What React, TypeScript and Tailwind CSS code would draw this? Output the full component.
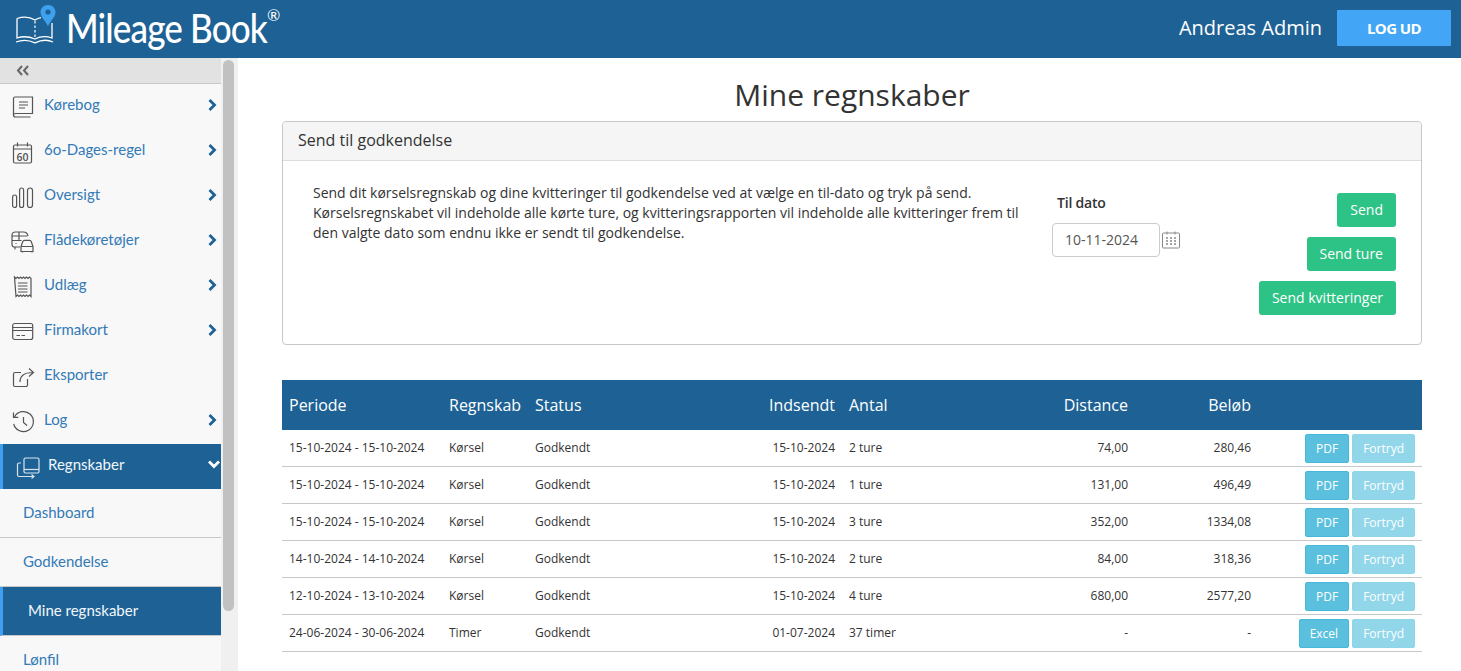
import React from "react";

function Logo() {
  return (
    <svg width="42" height="48" viewBox="0 0 42 48" fill="none" className="shrink-0">
      <path d="M2 13.500V33c6-2 12-1.500 18 1 5-2.500 11-3 17-1V18" stroke="#fff" strokeWidth="1.300" />
      <path d="M2 13.500c6-2 13-1.500 18 1.500 2-1.200 4-1.900 6-2.300" stroke="#fff" strokeWidth="1.300" />
      <path d="M20 16v17" stroke="#fff" strokeWidth="1.200" strokeDasharray="2.500 2" />
      <path d="M1 37c6-2.400 13-2 19 .8 6-2.800 13-3.200 18-.8" stroke="#fff" strokeWidth="1.300" />
      <path d="M33 0c-4.400 0-7.500 3.200-7.500 7.200 0 4.800 5.200 8.800 7.500 14 2.300-5.200 7.500-9.200 7.500-14C40.500 3.200 37.400 0 33 0z" fill="#3fa0ef" />
      <circle cx="33" cy="7" r="2.600" fill="#1e6295" />
    </svg>
  );
}

const iconProps = {
  width: 24,
  height: 24,
  viewBox: "0 0 24 24",
  fill: "none",
  stroke: "#555",
  strokeWidth: 1.2,
  className: "shrink-0",
};

function BookIcon() {
  return (
    <svg {...iconProps}>
      <path d="M1.500 20V3.500C1.500 2.500 2.300 2 3 2H20.500V18.500H3.500C2.300 18.500 1.500 19 1.500 20s.8 2 2 2h15" />
      <path d="M7 7h9M7 10h9M7 13h6" />
    </svg>
  );
}

function CalendarSixty() {
  return (
    <svg {...iconProps}>
      <rect x="1.500" y="5" width="18" height="18" rx="1.500" />
      <path d="M1.500 9h18M5.500 2.500v4M15.500 2.500v4" />
      <text x="10.500" y="20.500" textAnchor="middle" fontSize="10.500" fontWeight="600" fill="#555" stroke="none" fontFamily="'Open Sans', sans-serif">60</text>
    </svg>
  );
}

function BarsIcon() {
  return (
    <svg {...iconProps}>
      <rect x="0.600" y="10" width="4" height="12.500" rx="2" />
      <rect x="7.600" y="3" width="4" height="19.500" rx="2" />
      <rect x="15.500" y="3" width="5" height="19.500" rx="2.500" />
    </svg>
  );
}

function FleetIcon() {
  return (
    <svg width="26" height="24" viewBox="0 1 26 24" fill="none" stroke="#555" strokeWidth="1.200" className="-ml-[1px] shrink-0">
      <path d="M9 18H3.500C2 18 1 17 1 15.500V6C1 4 2.500 3 4.500 3h8c2.500 0 4 1.200 4.500 4" />
      <path d="M1 11.500h9.500M1 7h15.500M8 3v8.500M4 18v2.500M4.500 14.500h1" />
      <path d="M10 17.500l1.800-5c.3-.8.9-1.200 1.700-1.200h5c.8 0 1.400.4 1.700 1.200l1.800 5v5H10zM10 17.500h12.500M11.500 22.500v1M21 22.500v1" />
    </svg>
  );
}

function ReceiptIcon() {
  return (
    <svg {...iconProps}>
      <path d="M2.500 2l1.500 1.500L5.500 2 7 3.500 8.500 2 10 3.500 11.500 2 13 3.500 14.500 2 16 3.500 17.500 2l1.500 1.500v18l-1.500-1.500-1.500 1.500-1.500-1.500-1.500 1.500-1.500-1.500-1.500 1.500-1.500-1.500-1.500 1.500-1.500-1.500-1.500 1.500z" />
      <path d="M6 8h9.500M6 11h9.500M6 14h9.500M6 17h9.500" />
    </svg>
  );
}

function CardIcon() {
  return (
    <svg {...iconProps}>
      <rect x="0.700" y="3.500" width="20" height="16" rx="2" />
      <path d="M.7 7.500h20M.7 10.500h20" />
      <path d="M4.500 15.500h3.500M9.500 15.500h3.500" />
    </svg>
  );
}

function ShareIcon() {
  return (
    <svg {...iconProps}>
      <path d="M9 7.500H3A1.500 1.500 0 0 0 1.500 9v11A1.500 1.500 0 0 0 3 21.500h11a1.500 1.500 0 0 0 1.500-1.500v-6" />
      <path d="M8 17c0-6 4-9.500 13-9.500M17 3.500l4.500 4-4.500 4" />
    </svg>
  );
}

function HistoryIcon() {
  return (
    <svg {...iconProps}>
      <path d="M2.500 7a10 10 0 1 1-.8 7" />
      <path d="M1.500 2.500v4.800h4.800M11.500 7v5.500l3.500 3" />
    </svg>
  );
}

function LedgerIcon() {
  return (
    <svg width="24" height="24" viewBox="0 0 24 24" fill="none" stroke="#d7e3ee" strokeWidth="1.200" className="shrink-0">
      <rect x="8" y="3" width="15" height="15" rx="1.500" />
      <path d="M8 14.500h15" />
      <path d="M5 8H3C2 8 1.500 8.500 1.500 9.500V20c0 1 .6 1.500 1.500 1.500h15M15.500 19.500l2.500 2-2.500 2" />
    </svg>
  );
}

function ArrowRight() {
  return (
    <svg width="9" height="12" viewBox="0 0 9 12" fill="none" stroke="#1e6295" strokeWidth="2.800" className="mb-[3px] ml-auto shrink-0">
      <path d="M1.500 1l5 5-5 5" />
    </svg>
  );
}

function ArrowDown() {
  return (
    <svg width="12" height="9" viewBox="0 0 12 9" fill="none" stroke="#fff" strokeWidth="2.800" className="mb-[4px] ml-auto shrink-0">
      <path d="M1 1.500l5 5 5-5" />
    </svg>
  );
}

const menu = [
  { label: "Kørebog", icon: <BookIcon />, arrow: true },
  { label: "6o-Dages-regel", icon: <CalendarSixty />, arrow: true },
  { label: "Oversigt", icon: <BarsIcon />, arrow: true },
  { label: "Flådekøretøjer", icon: <FleetIcon />, arrow: true },
  { label: "Udlæg", icon: <ReceiptIcon />, arrow: true },
  { label: "Firmakort", icon: <CardIcon />, arrow: true },
  { label: "Eksporter", icon: <ShareIcon />, arrow: false },
  { label: "Log", icon: <HistoryIcon />, arrow: true },
];

const rows = [
  { period: "15-10-2024 - 15-10-2024", type: "Kørsel", sent: "15-10-2024", count: "2 ture", distance: "74,00", amount: "280,46", file: "PDF" },
  { period: "15-10-2024 - 15-10-2024", type: "Kørsel", sent: "15-10-2024", count: "1 ture", distance: "131,00", amount: "496,49", file: "PDF" },
  { period: "15-10-2024 - 15-10-2024", type: "Kørsel", sent: "15-10-2024", count: "3 ture", distance: "352,00", amount: "1334,08", file: "PDF" },
  { period: "14-10-2024 - 14-10-2024", type: "Kørsel", sent: "15-10-2024", count: "2 ture", distance: "84,00", amount: "318,36", file: "PDF" },
  { period: "12-10-2024 - 13-10-2024", type: "Kørsel", sent: "15-10-2024", count: "4 ture", distance: "680,00", amount: "2577,20", file: "PDF" },
  { period: "24-06-2024 - 30-06-2024", type: "Timer", sent: "01-07-2024", count: "37 timer", distance: "-", amount: "-", file: "Excel" },
];

function Sidebar() {
  return (
    <aside className="flex w-[238px] shrink-0 overflow-hidden">
      <nav className="w-[221px] shrink-0 bg-[#f8f8f8] font-['Lato',sans-serif]">
        <div className="flex h-[26px] items-center border-b border-[#c8c8c8] bg-[#e2e2e2] pl-[16px]">
          <svg width="13" height="11" viewBox="0 0 13 11" fill="none" stroke="#666" strokeWidth="2">
            <path d="M6 1L2 5.500 6 10M12 1L8 5.500 12 10" />
          </svg>
        </div>
        {menu.map((m) => (
          <div key={m.label} className="flex h-[45px] items-center pl-[12px] pr-[4px] text-[15px] text-[#337ab7]">
            <span className="flex w-[32px] justify-start">{m.icon}</span>
            <span className="pb-[4px]">{m.label}</span>
            {m.arrow && <ArrowRight />}
          </div>
        ))}
        <div className="flex h-[45px] items-center border-l-[3px] border-[#3fa0ef] bg-[#1e6295] pl-[13px] pr-[1px] text-[15px] text-[#f2f6fa]">
          <span className="flex w-[32px]"><LedgerIcon /></span>
          <span className="pb-[4px]">Regnskaber</span>
          <ArrowDown />
        </div>
        <div className="flex h-[49px] items-center border-b border-[#c8c8c8] pb-[2px] pl-[23px] text-[15px] text-[#337ab7]">Dashboard</div>
        <div className="flex h-[49px] items-center border-b border-[#c8c8c8] pb-[2px] pl-[23px] text-[15px] text-[#337ab7]">Godkendelse</div>
        <div className="flex h-[49px] items-center border-b border-[#c8c8c8] border-l-[3px] border-l-[#3fa0ef] bg-[#1e6295] pb-[2px] pl-[25px] text-[15px] text-[#f2f6fa]">Mine regnskaber</div>
        <div className="flex h-[49px] items-center pb-[2px] pl-[23px] text-[15px] text-[#337ab7]">Lønfil</div>
      </nav>
      <div className="h-full w-[17px] bg-[#f0f0f0] pl-[2px] pt-[2px]">
        <div className="h-[551px] w-[11px] rounded-b-md rounded-t-md bg-[#c1c1c1]" />
      </div>
    </aside>
  );
}

function Row({ r }: { r: (typeof rows)[number] }) {
  return (
    <div className="grid h-[37px] grid-cols-[160px_86px_150px_164px_120px_173px_123px_164px] items-center border-b border-[#c8c8c8] text-[12px] text-[#333]">
      <span className="pl-[7px]">{r.period}</span>
      <span className="pl-[7px]">{r.type}</span>
      <span className="pl-[7px]">Godkendt</span>
      <span className="pr-[7px] text-right">{r.sent}</span>
      <span className="pl-[7px]">{r.count}</span>
      <span className="pr-[7px] text-right">{r.distance}</span>
      <span className="pr-[7px] text-right">{r.amount}</span>
      <span className="flex justify-end gap-[3px] pr-[7px]">
        <button className="h-[29px] rounded-[2px] border border-[#46b8da] bg-[#5bc0de] px-[10px] pt-[1px] text-[12px] text-white">{r.file}</button>
        <button className="h-[29px] rounded-[2px] border border-[#8fd5ea] bg-[#92d6ea] px-[10px] pt-[1px] text-[12px] font-medium text-white">Fortryd</button>
      </span>
    </div>
  );
}

export default function App() {
  return (
    <div className="flex h-screen flex-col overflow-hidden bg-white font-['Open_Sans',sans-serif] text-[#333]">
      <header className="flex h-[58px] shrink-0 items-center bg-[#1e6295] pl-[15px] pr-[10px]">
        <Logo />
        <div className="flex items-start pl-[9px] font-['Lato',sans-serif] text-white">
          <span className="w-[201px] origin-left scale-x-[0.855] whitespace-nowrap pb-[4px] text-[41px] font-medium leading-none tracking-[-1px]">Mileage Book</span>
          <span className="text-[16px] leading-none">®</span>
        </div>
        <span className="ml-auto pb-[2px] text-[20px] text-white">Andreas Admin</span>
        <button className="mb-[2px] ml-[15px] h-[36px] w-[114px] rounded-[1px] bg-[#42a5f5] text-[15px] font-bold tracking-[-0.600px] text-white">LOG UD</button>
      </header>
      <div className="flex min-h-0 flex-1">
        <Sidebar />
        <main className="min-w-0 flex-1 px-[39px]">
          <div className="w-[1145px] pl-[5px]">
            <h1 className="pb-[6px] pt-[16px] text-center text-[30px] leading-[41px] text-[#333]">Mine regnskaber</h1>
            <section className="h-[224px] rounded-[4px] border border-[#c8c8c8]">
              <div className="flex h-[39px] items-center rounded-t-[4px] border-b border-[#ddd] bg-[#f5f5f5] pb-[2px] pl-[15px] text-[16px]">Send til godkendelse</div>
              <div className="flex">
                <p className="w-[739px] pl-[30px] pt-[22px] text-[14px] leading-[20px] text-[#333]">
                  Send dit kørselsregnskab og dine kvitteringer til godkendelse ved at vælge en til-dato og tryk på send. Kørselsregnskabet vil indeholde alle kørte ture, og kvitteringsrapporten vil indeholde alle kvitteringer frem til den valgte dato som endnu ikke er sendt til godkendelse.
                </p>
                <div className="pl-[30px] pt-[32px]">
                  <div className="pl-[5px] text-[14px] font-semibold leading-[20px] tracking-[-0.200px]">Til dato</div>
                  <div className="mt-[10px] flex items-center gap-[1px]">
                    <div className="flex h-[34px] w-[108px] items-center rounded-[4px] border border-[#ccc] pb-[2px] pl-[12px] text-[14px] text-[#555]">10-11-2024</div>
                    <svg width="20" height="20" viewBox="0 0 20 20" fill="none" stroke="#888" strokeWidth="1">
                      <rect x="1.500" y="3" width="17" height="15" rx="1" />
                      <path d="M6 1.500v3M14 1.500v3" />
                      <path d="M5 8h2M9 8h2M13 8h2M5 11h2M9 11h2M13 11h2M5 14h2M9 14h2M13 14h2" strokeWidth="1.500" />
                    </svg>
                  </div>
                </div>
                <div className="ml-auto flex flex-col items-end gap-[10px] pr-[25px] pt-[32px]">
                  <button className="h-[34px] rounded-[3px] bg-[#2ec386] px-[13px] pb-[2px] text-[14px] text-white">Send</button>
                  <button className="h-[34px] rounded-[3px] bg-[#2ec386] px-[13px] pb-[2px] text-[14px] text-white">Send ture</button>
                  <button className="h-[34px] rounded-[3px] bg-[#2ec386] px-[13px] pb-[2px] text-[14px] text-white">Send kvitteringer</button>
                </div>
              </div>
            </section>
            <div className="mt-[35px]">
              <div className="grid h-[50px] grid-cols-[160px_86px_150px_164px_120px_173px_123px_164px] items-center bg-[#1e6295] text-[16px] text-white">
                <span className="pl-[7px]">Periode</span>
                <span className="pl-[7px]">Regnskab</span>
                <span className="pl-[7px]">Status</span>
                <span className="pr-[7px] text-right">Indsendt</span>
                <span className="pl-[7px]">Antal</span>
                <span className="pr-[7px] text-right">Distance</span>
                <span className="pr-[7px] text-right">Beløb</span>
                <span />
              </div>
              {rows.map((r, i) => (
                <Row key={i} r={r} />
              ))}
            </div>
          </div>
        </main>
      </div>
    </div>
  );
}
